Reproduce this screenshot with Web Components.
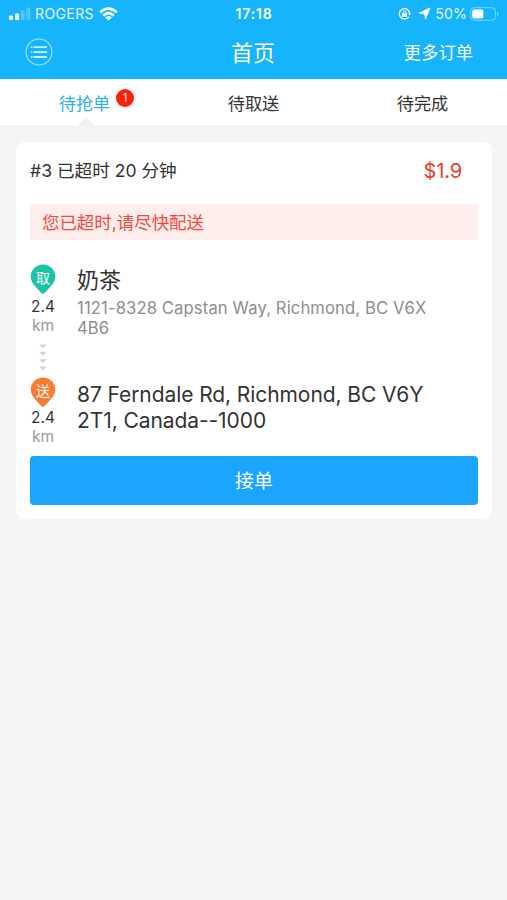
<!DOCTYPE html>
<html lang="zh-CN">
<head>
<meta charset="utf-8">
<title>首页</title>
<style>
html,body{margin:0;background:#f5f5f5}
body{width:507px;height:900px;overflow:hidden;font-family:Inter,"Noto Sans CJK SC",sans-serif;color:#333}
</style>
</head>
<body>
<delivery-app></delivery-app>
<script>
function define(name, html) {
  const t = document.createElement('template');
  t.innerHTML = html;
  customElements.define(name, class extends HTMLElement {
    constructor() {
      super();
      this.attachShadow({mode: 'open'}).appendChild(t.content.cloneNode(true));
    }
  });
}

define('status-bar', `<style>
:host{display:grid;grid-template-columns:1fr auto 1fr;align-items:center;height:27px;padding:0 7px 0 8px;color:#fff;font-size:14px;line-height:27px}
div{display:flex;align-items:center;height:27px}
.r{justify-content:flex-end}
.c{opacity:.9;letter-spacing:.4px;margin-left:4px;font-size:14px;line-height:28px}
.t{font-weight:600;font-size:14px;letter-spacing:.8px;line-height:28px;height:27px}
.p{opacity:.88;margin-left:4px;font-size:14.2px;letter-spacing:.1px;line-height:28px;height:27px}
svg{display:block;flex:none}
</style>
<div><svg width="23" height="14" viewBox="0 0 23 14" fill="#fff"><rect x="1" y="8.5" width="4" height="4.5" rx="1"/><rect x="7" y="6.5" width="4" height="6.5" rx="1"/><rect x="12.7" y="3.3" width="4" height="9.7" rx="1" opacity=".25"/><rect x="18.3" y="0.5" width="4" height="12.5" rx="1" opacity=".25"/></svg>
<span class="c">ROGERS</span>
<svg style="margin-left:5px" width="19" height="14" viewBox="0 0 19 14" fill="none" stroke="#fff" stroke-width="2.7"><path d="M1.2 5.3Q9.5-2.2 17.8 5.3M4.3 8.7Q9.5 3.6 14.7 8.7"/><path d="M9.5 13.6 6.3 10.4Q9.5 7.6 12.7 10.4Z" fill="#fff" stroke="none"/></svg></div>
<span class="t">17:18</span>
<div class="r"><svg width="13" height="14" viewBox="0 0 13 14" fill="none" stroke="#fff" stroke-width="1.3"><path d="M9.8 2.8A5.2 5.2 0 1 0 10.8 9.8M11.5 6A5.2 5.2 0 0 0 9.2 2.4"/><path d="M10 6.2h3l-1.5 2.4z" fill="#fff" stroke="none"/><rect x="4" y="6.3" width="5" height="3.7" fill="#fff" stroke="none"/><path d="M5 6.5V5.4a1.5 1.5 0 0 1 3 0v1.1" stroke-width="1"/></svg>
<svg style="margin-left:7px" width="13" height="13" viewBox="0 0 12 13" fill="#fff" stroke="#fff" stroke-width=".8" stroke-linejoin="round"><path d="M11.5.9 7 12 6.1 7 .6 6.1Z"/></svg>
<span class="p">50%</span>
<svg style="margin-left:3px" width="30" height="14" viewBox="0 0 30 14"><rect x=".7" y=".7" width="24.8" height="12.6" rx="3.5" fill="none" stroke="#fff" stroke-opacity=".4"/><rect x="2.3" y="2.4" width="11" height="9.2" rx="1.8" fill="#fff"/><path d="M27 4.8q3 2.2 0 4.4z" fill="#fff" opacity=".45"/></svg></div>`);

define('nav-bar', `<style>
:host{display:grid;grid-template-columns:1fr auto 1fr;align-items:center;height:52px;padding:0 34px 0 25px;color:#fff}
.t{font-size:22px;line-height:50px;margin-left:8px}
.m{font-size:17.3px;line-height:50px;justify-self:end}
svg{display:block;margin-top:-2px}
</style>
<svg width="28" height="28" viewBox="0 0 28 28" fill="none" stroke="#fff"><circle cx="14" cy="14" r="13" opacity=".6" stroke-width="1.2"/><path d="M8.6 9.2H22M8.6 14.2H22M8.6 19H22" stroke-width="1.8" opacity=".8"/><path d="M5.8 9.2h1.7M5.8 14.2h1.7M5.8 19h1.7" stroke-width="1.8" opacity=".65"/></svg>
<span class="t">首页</span><span class="m">更多订单</span>`);

define('tab-item', `<style>
:host{display:flex;justify-content:center;position:relative;font-size:17.2px;line-height:49px;color:#333}
:host([active]){color:#2ab0ee}
.b{position:absolute;left:116px;top:10px;width:18px;height:18px;border-radius:50%;background:#fb2003;color:#fff;font-size:11.5px;line-height:18px;text-align:center}
.a{position:absolute;left:76px;bottom:-1px}
.b,.a{display:none}
:host([active]) .b,:host([active]) .a{display:block}
</style><slot></slot><span class="b"><slot name="badge"></slot></span>
<svg class="a" width="20" height="9" viewBox="0 0 20 9"><path d="M0 9 8.3 1.3q1.7-1.6 3.4 0L20 9z" fill="#f1f1f1"/></svg>`);

define('tab-bar', `<style>
:host{display:grid;grid-template-columns:repeat(3,1fr);height:47px;background:#fff;border-bottom:1px solid #ededed}
::slotted(*){height:47px}
</style><slot></slot>`);

define('map-pin', `<style>
:host{display:grid;width:26px;height:31px;color:#fff;font-size:14px;line-height:27px;text-align:center}
svg,span{grid-area:1/1}
svg{display:block}
</style><svg width="26" height="31" viewBox="0 0 26 31"><path d="M13 .5A12.3 12.3 0 0 1 25.3 12.8C25.3 18.2 21 22.1 15.4 28.2Q13 31.2 10.6 28.2C5 22.1.7 18.2.7 12.8A12.3 12.3 0 0 1 13 .5z" fill="var(--pin)"/></svg><span><slot></slot></span>`);

define('route-stop', `<style>
:host{display:grid;grid-template-columns:26px 1fr;column-gap:21px}
.s{display:flex;flex-direction:column;align-items:center}
.d{font-size:15.4px;line-height:20px;margin-top:var(--gap,2px);color:#333}
.k{font-size:15.6px;line-height:18px;color:#999}
</style><div class="s"><slot name="pin"></slot><span class="d"><slot name="distance"></slot></span><span class="k">km</span></div><div><slot></slot></div>`);

define('route-arrows', `<style>:host{display:block;width:26px;height:31px}svg{display:block;margin:0 auto}</style>
<svg width="12" height="30" viewBox="0 0 12 30" fill="#d4d4d4"><path d="M2 1.5h8L6 5.3zM2 8.8h8L6 12.6zM2 16.2h8L6 20zM2 23.6h8L6 27.4z"/></svg>`);

define('order-card', `<style>
:host{display:block;margin:15px 15px 0 16px;padding:0 14px 15px;height:362px;border-radius:9px;background:#fff}
.h{display:flex;justify-content:space-between;height:62px;padding-right:16px;font-size:17.6px;line-height:58px}
.p{color:#f23b2f;font-size:20.2px;letter-spacing:-.2px}
.w{height:36px;line-height:37px;padding-left:12px;background:#ffeeec;color:#f4483c;font-size:17.45px;border-radius:1px}
.one{margin-top:24px;height:72px}
.two{margin-top:3px;height:65px;--gap:0px}
.n{font-size:22px;line-height:32px;height:34px;color:#333}
.a{font-size:16.6px;line-height:20px;letter-spacing:.13px;color:#8d8d8d}
.l{font-size:21px;line-height:26px;letter-spacing:-.08px;padding-top:5px;color:#333}
.n,.a,.l{white-space:nowrap}
route-arrows{margin-top:7px}
button{display:block;width:100%;height:49px;margin-top:14px;padding:0;border:0;border-radius:4px;background:#1ba5ff;color:#fff;font:19px/51px Inter,"Noto Sans CJK SC",sans-serif}
</style>
<div class="h"><span>#3 已超时 20 分钟</span><span class="p">$1.9</span></div>
<div class="w">您已超时,请尽快配送</div>
<route-stop class="one"><map-pin slot="pin" style="--pin:#1bc2a6">取</map-pin><span slot="distance">2.4</span>
<div class="n">奶茶</div><div class="a">1121-8328 Capstan Way, Richmond, BC V6X<br>4B6</div></route-stop>
<route-arrows></route-arrows>
<route-stop class="two"><map-pin slot="pin" style="--pin:#fb7b30">送</map-pin><span slot="distance">2.4</span>
<div class="l">87 Ferndale Rd, Richmond, BC V6Y<br>2T1, Canada--1000</div></route-stop>
<button>接单</button>`);

define('delivery-app', `<style>
:host{display:block;height:900px;background:#f5f5f5}
header{height:79px;background:#16b4fb}
</style>
<header><status-bar></status-bar><nav-bar></nav-bar></header>
<tab-bar><tab-item active>待抢单<span slot="badge">1</span></tab-item><tab-item>待取送</tab-item><tab-item>待完成</tab-item></tab-bar>
<order-card></order-card>`);
</script>
</body>
</html>
